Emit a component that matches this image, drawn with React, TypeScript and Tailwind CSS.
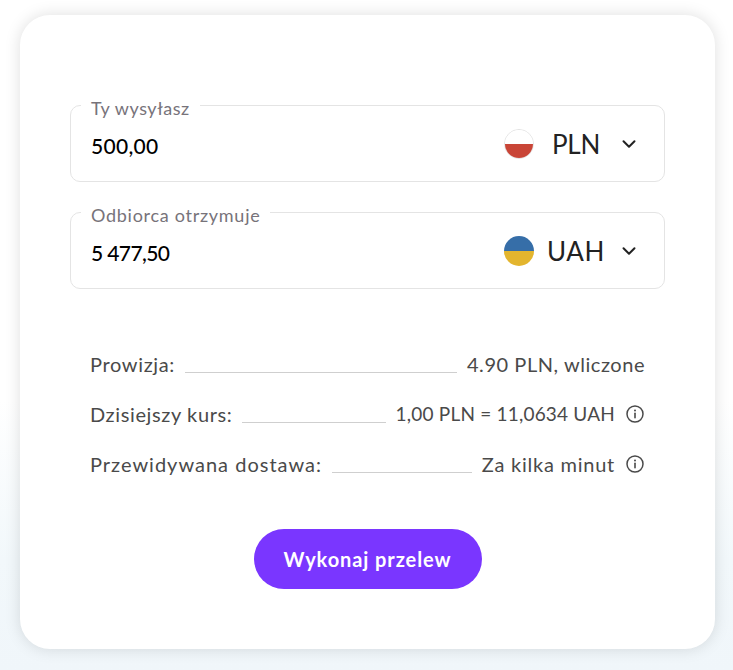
import { ChevronDown } from "lucide-react";

const FONT = "font-['Lato','Liberation_Sans',sans-serif]";

function InfoIcon() {
  return (
    <svg width="20" height="20" viewBox="0 0 20 20" fill="none" stroke="#4a4a4a" className="ml-[10px] shrink-0">
      <circle cx="10" cy="10" r="8" strokeWidth="1.5" />
      <path d="M10 9.2v4.6" strokeWidth="1.6" strokeLinecap="round" />
      <circle cx="10" cy="6.4" r="1" fill="#4a4a4a" stroke="none" />
    </svg>
  );
}

function Flag({ top, bottom, ring }: { top: string; bottom: string; ring?: boolean }) {
  return (
    <span className={`flex h-[30px] w-[30px] flex-col overflow-hidden rounded-full ${ring ? "border border-[#e2e2e2]" : ""}`}>
      <span className="flex-1" style={{ background: top }} />
      <span className="flex-1" style={{ background: bottom }} />
    </span>
  );
}

type FieldProps = {
  label: string;
  labelClass: string;
  value: string;
  valueClass: string;
  code: string;
  codeClass: string;
  flag: React.ReactNode;
};

function Field({ label, labelClass, value, valueClass, code, codeClass, flag }: FieldProps) {
  return (
    <fieldset className="h-[90px] rounded-[10px] border border-[#e4e4e4] pl-[10px] pr-6">
      <legend className={`px-[10px] pt-[8px] pb-px text-[18px] leading-[17px] text-[#77737a] ${labelClass}`}>{label}</legend>
      <div className="flex h-[60px] items-center justify-between pb-2 pl-[10px]">
        <span className={`pt-1 text-[21px] font-medium text-black ${valueClass}`}>{value}</span>
        <div className="flex items-center">
          {flag}
          <span className={`w-[84px] text-center text-[26px] text-[#222] ${codeClass}`}>{code}</span>
          <ChevronDown size={22} strokeWidth={2.2} className="text-[#222]" />
        </div>
      </div>
    </fieldset>
  );
}

function Row({ label, value, labelClass, valueClass, info }: { label: string; value: string; labelClass: string; valueClass: string; info?: boolean }) {
  return (
    <div className="flex h-[50px] items-center text-[20px] text-[#4a4a4a]">
      <span className={`whitespace-nowrap ${labelClass}`}>{label}</span>
      <span className="mx-[10px] mt-[17px] h-px flex-1 bg-[#cfcfcf]" />
      <span className={`whitespace-nowrap ${valueClass}`}>{value}</span>
      {info && <InfoIcon />}
    </div>
  );
}

export default function App() {
  return (
    <div className={`h-[670px] w-[733px] overflow-hidden bg-[linear-gradient(to_bottom,#ffffff_400px,#f2f8fb_560px,#f0f6fa_100%)] pl-5 pt-[15px] ${FONT}`}>
      <div className="h-[634px] w-[695px] rounded-[30px] bg-white px-[50px] pt-[77px] shadow-[0_0_16px_rgba(0,0,0,0.13)]">
        <div className="flex flex-col gap-[17px]">
          <Field
            label="Ty wysyłasz"
            labelClass="tracking-[0.55px]"
            value="500,00"
            valueClass="tracking-[0.3px]"
            code="PLN"
            codeClass="tracking-[-0.3px]"
            flag={<Flag top="#ffffff" bottom="#c94537" ring />}
          />
          <Field
            label="Odbiorca otrzymuje"
            labelClass="tracking-[0.72px]"
            value="5 477,50"
            valueClass="tracking-[-0.6px]"
            code="UAH"
            codeClass="tracking-[0.6px]"
            flag={<Flag top="#366ea8" bottom="#e3b52e" />}
          />
        </div>
        <div className="mt-[50px] px-5">
          <Row label="Prowizja:" value="4.90 PLN, wliczone" labelClass="tracking-[0.65px]" valueClass="tracking-[0.55px]" />
          <Row label="Dzisiejszy kurs:" value="1,00 PLN = 11,0634 UAH" labelClass="tracking-[0.62px]" valueClass="text-[19px] tracking-[0.2px]" info />
          <Row label="Przewidywana dostawa:" value="Za kilka minut" labelClass="tracking-[1px]" valueClass="tracking-[0.75px]" info />
        </div>
        <div className="mt-[40px] flex justify-center">
          <button className="h-[60px] w-[228px] rounded-[30px] bg-[#7a36ff] text-[20px] font-bold tracking-[0.9px] text-white">
            Wykonaj przelew
          </button>
        </div>
      </div>
    </div>
  );
}
